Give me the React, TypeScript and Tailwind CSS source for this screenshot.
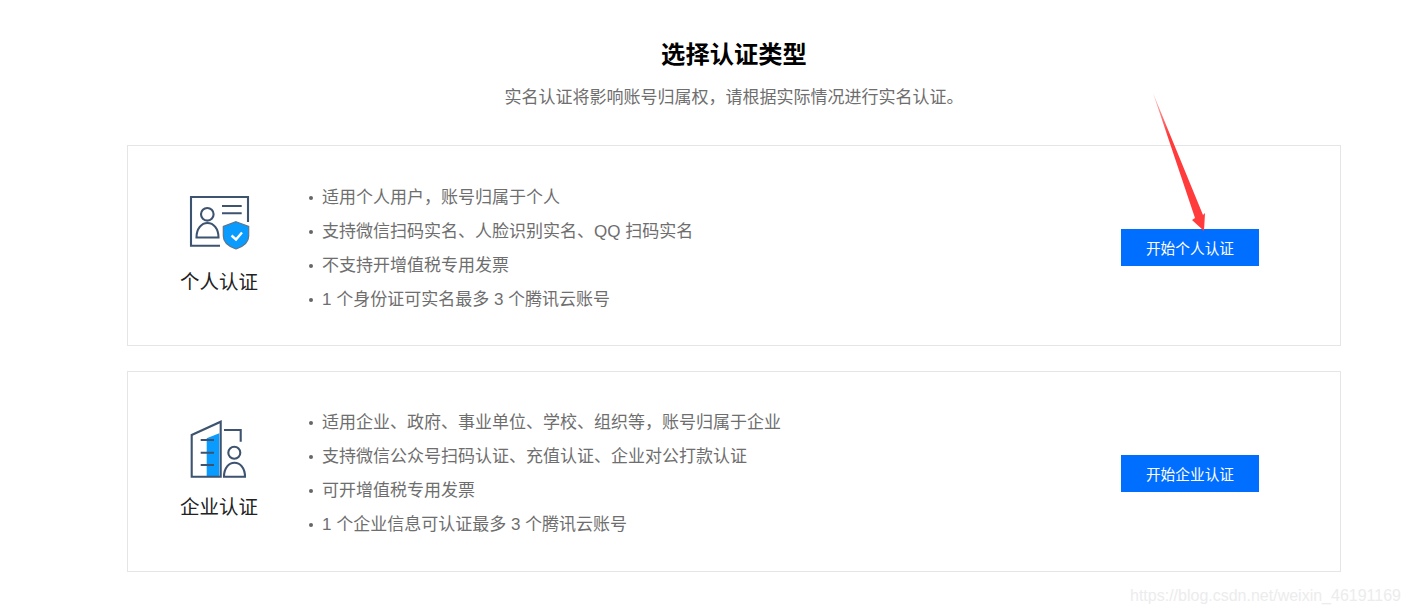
import React from "react";

const FONT = "font-['Liberation_Sans','Noto_Sans_CJK_SC',sans-serif]";

function PersonIcon() {
  return (
    <svg width="66" height="59" viewBox="26 13 66 59" fill="none" stroke="#3d5370" strokeWidth="2.1">
      <path d="M60 65.700H31V17H88V42" />
      <circle cx="47.300" cy="34.300" r="6.300" />
      <path d="M36.500 57.500c0-9 5-14.500 11-14.500s11 5.500 11 14.500z" />
      <path d="M62 26H81.700M62 33.300H81.700" />
      <path d="M76 41.700L88.700 46.500V56C88.700 63 82 67 76 69C70 67 63.300 63 63.300 56V46.500Z" fill="#0a9bff" stroke="#5a7590" strokeWidth="1.200" />
      <path d="M71.500 55.500L76 59.500L82 52.500" stroke="#fff" strokeWidth="2.400" />
    </svg>
  );
}

function BuildingIcon() {
  return (
    <svg width="66" height="59" viewBox="26 14 66 59" fill="none" stroke="#3d5370" strokeWidth="2.1">
      <polygon points="46.700,33.300 59.300,28.300 59.300,71 46.700,71" fill="#0a9bff" stroke="none" />
      <path d="M31.700 71.700V30L60.700 16.700V71.700Z" />
      <path d="M40.700 35H54M40.700 47.700H54M40.700 60H54" />
      <path d="M64 25H80.700V36.700" />
      <circle cx="74.300" cy="47.700" r="6" />
      <path d="M64 71.700c0-9 5-14 10.500-14s10.500 5 10.500 14z" />
    </svg>
  );
}

function Card({ icon, label, items, button, className, listClass, labelClass }: { icon: React.ReactNode; label: string; items: string[]; button: string; className: string; listClass: string; labelClass: string }) {
  return (
    <div className={`flex h-[201px] border border-[#e5e5e5] bg-white ${className}`}>
      <div className="ml-[11px] flex w-[160px] flex-col items-center pt-[47px]">
        {icon}
        <div className={`text-[19.500px] leading-[28px] text-[#222] ${labelClass}`}>{label}</div>
      </div>
      <ul className={`ml-[10px] ${listClass}`}>
        {items.map((t) => (
          <li key={t} className="flex h-[34px] items-center text-[17px] text-[#6e6e6e]">
            <span className="mr-[9px] h-[4px] w-[4px] rounded-full bg-[#666]" />
            {t}
          </li>
        ))}
      </ul>
      <button className="mt-[4px] mr-[81px] ml-auto h-[37px] w-[138px] self-center bg-[#006eff] pt-[3px] text-[14.700px] text-white">
        {button}
      </button>
    </div>
  );
}

export default function App() {
  return (
    <div className={`relative h-[615px] w-[1410px] overflow-hidden bg-white ${FONT}`}>
      <div className="ml-[127px] w-[1214px] pt-[40px]">
        <h1 className="text-center text-[24.300px] leading-[30px] font-bold text-black">选择认证类型</h1>
        <p className="mt-[15px] text-center text-[17px] leading-[26px] text-[#6e6e6e]">
          实名认证将影响账号归属权，请根据实际情况进行实名认证。
        </p>
        <Card
          className="mt-[34px]"
          listClass="pt-[35px]"
          labelClass="mt-[16px]"
          icon={<PersonIcon />}
          label="个人认证"
          button="开始个人认证"
          items={["适用个人用户，账号归属于个人", "支持微信扫码实名、人脸识别实名、QQ 扫码实名", "不支持开增值税专用发票", "1 个身份证可实名最多 3 个腾讯云账号"]}
        />
        <Card
          className="mt-[25px]"
          listClass="pt-[34px]"
          labelClass="mt-[15px]"
          icon={<BuildingIcon />}
          label="企业认证"
          button="开始企业认证"
          items={["适用企业、政府、事业单位、学校、组织等，账号归属于企业", "支持微信公众号扫码认证、充值认证、企业对公打款认证", "可开增值税专用发票", "1 个企业信息可认证最多 3 个腾讯云账号"]}
        />
      </div>

      <svg className="absolute top-[90px] left-[1150px]" width="60" height="145" viewBox="1150 90 60 145">
        <defs>
          <linearGradient id="fade" x1="1154" y1="94" x2="1204" y2="231" gradientUnits="userSpaceOnUse">
            <stop offset="0" stopColor="#ff3b3b" stopOpacity="0.35" />
            <stop offset="0.3" stopColor="#ff3b3b" />
            <stop offset="1" stopColor="#ff3b3b" />
          </linearGradient>
        </defs>
        <polygon points="1153,93 1203,215 1205,213 1204,231 1192,220 1195,218" fill="url(#fade)" />
      </svg>

      <div className="absolute top-[587px] left-[1130px] text-[16px] leading-[18px] text-[#ececec]">
        https://blog.csdn.net/weixin_46191169
      </div>
    </div>
  );
}
